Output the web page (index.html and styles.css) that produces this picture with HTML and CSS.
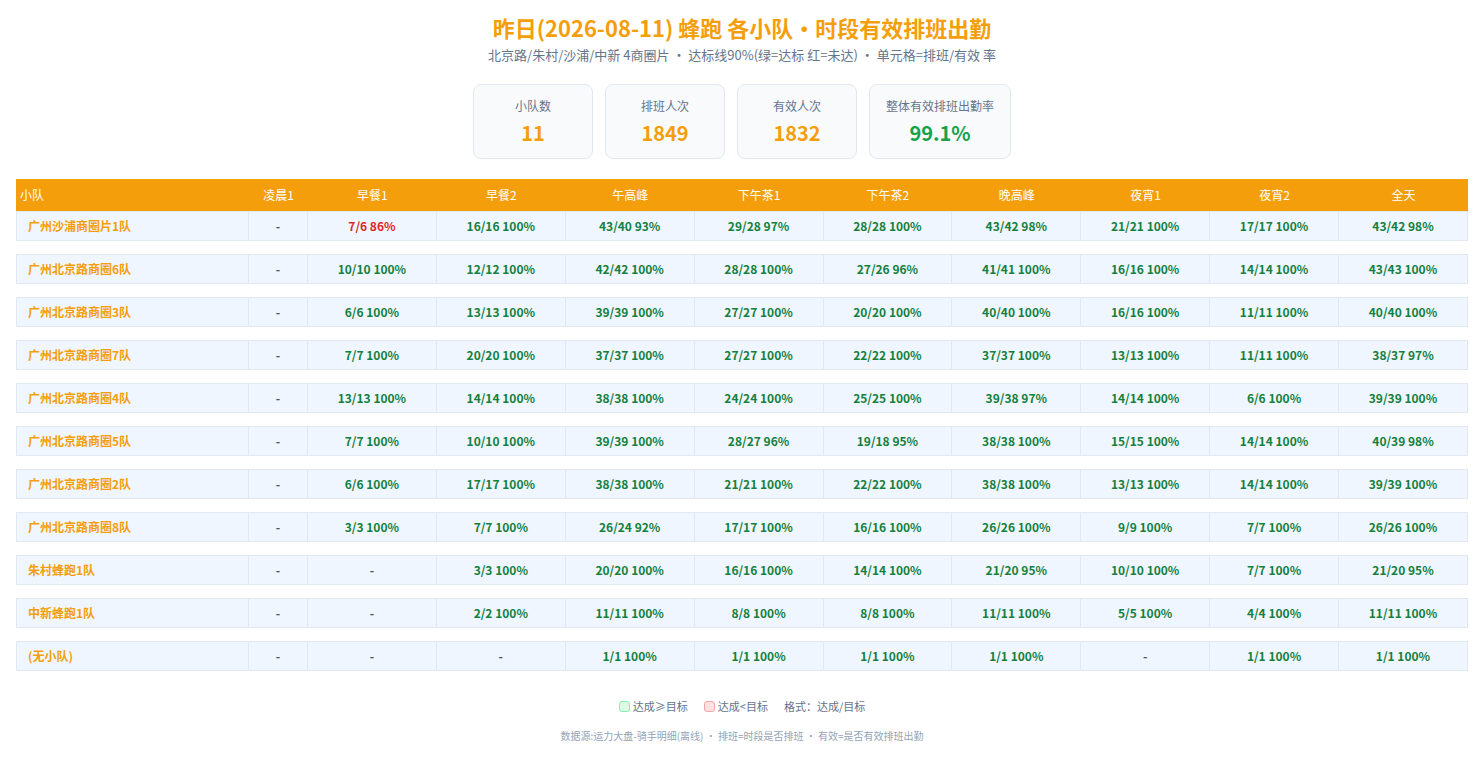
FILE: index.html
```html
<!DOCTYPE html>
<html lang="zh-CN">
<head>
<meta charset="utf-8">
<title>蜂跑 各小队·时段有效排班出勤</title>
<link rel="stylesheet" href="styles.css">
</head>
<body>
<header class="head">
  <h1 class="title">昨日(2026-08-11) 蜂跑 各小队・时段有效排班出勤</h1>
  <p class="subtitle">北京路/朱村/沙浦/中新 4商圈片 ・ 达标线90%(绿=达标 红=未达) ・ 单元格=排班/有效 率</p>
</header>
<section class="cards">
  <div class="card"><div class="card-label">小队数</div><div class="card-value">11</div></div>
  <div class="card"><div class="card-label">排班人次</div><div class="card-value">1849</div></div>
  <div class="card"><div class="card-label">有效人次</div><div class="card-value">1832</div></div>
  <div class="card"><div class="card-label">整体有效排班出勤率</div><div class="card-value good">99.1%</div></div>
</section>
<table class="grid">
  <colgroup>
    <col class="c-name"><col class="c-early"><col class="c-slot"><col class="c-slot"><col class="c-slot"><col class="c-slot"><col class="c-slot"><col class="c-slot"><col class="c-slot"><col class="c-slot"><col class="c-slot">
  </colgroup>
  <thead>
    <tr><th class="th-name">小队</th><th>凌晨1</th><th>早餐1</th><th>早餐2</th><th>午高峰</th><th>下午茶1</th><th>下午茶2</th><th>晚高峰</th><th>夜宵1</th><th>夜宵2</th><th>全天</th></tr>
  </thead>
  <tbody id="rows"></tbody>
</table>
<div class="legend">
  <span class="lg"><i class="sw sw-ok"></i>达成≥目标</span>
  <span class="lg"><i class="sw sw-bad"></i>达成&lt;目标</span>
  <span class="lg">格式：达成/目标</span>
</div>
<p class="foot">数据源:运力大盘-骑手明细(离线) ・ 排班=时段是否排班 ・ 有效=是否有效排班出勤</p>
<script>
var data = [
 ["广州沙浦商圈片1队","-","7/6 86%","16/16 100%","43/40 93%","29/28 97%","28/28 100%","43/42 98%","21/21 100%","17/17 100%","43/42 98%"],
 ["广州北京路商圈6队","-","10/10 100%","12/12 100%","42/42 100%","28/28 100%","27/26 96%","41/41 100%","16/16 100%","14/14 100%","43/43 100%"],
 ["广州北京路商圈3队","-","6/6 100%","13/13 100%","39/39 100%","27/27 100%","20/20 100%","40/40 100%","16/16 100%","11/11 100%","40/40 100%"],
 ["广州北京路商圈7队","-","7/7 100%","20/20 100%","37/37 100%","27/27 100%","22/22 100%","37/37 100%","13/13 100%","11/11 100%","38/37 97%"],
 ["广州北京路商圈4队","-","13/13 100%","14/14 100%","38/38 100%","24/24 100%","25/25 100%","39/38 97%","14/14 100%","6/6 100%","39/39 100%"],
 ["广州北京路商圈5队","-","7/7 100%","10/10 100%","39/39 100%","28/27 96%","19/18 95%","38/38 100%","15/15 100%","14/14 100%","40/39 98%"],
 ["广州北京路商圈2队","-","6/6 100%","17/17 100%","38/38 100%","21/21 100%","22/22 100%","38/38 100%","13/13 100%","14/14 100%","39/39 100%"],
 ["广州北京路商圈8队","-","3/3 100%","7/7 100%","26/24 92%","17/17 100%","16/16 100%","26/26 100%","9/9 100%","7/7 100%","26/26 100%"],
 ["朱村蜂跑1队","-","-","3/3 100%","20/20 100%","16/16 100%","14/14 100%","21/20 95%","10/10 100%","7/7 100%","21/20 95%"],
 ["中新蜂跑1队","-","-","2/2 100%","11/11 100%","8/8 100%","8/8 100%","11/11 100%","5/5 100%","4/4 100%","11/11 100%"],
 ["(无小队)","-","-","-","1/1 100%","1/1 100%","1/1 100%","1/1 100%","-","1/1 100%","1/1 100%"]
];
var tb = document.getElementById("rows");
var html = "";
data.forEach(function (r, i) {
  if (i > 0) html += '<tr class="spacer"><td colspan="11"></td></tr>';
  html += '<tr class="row"><td class="name">' + r[0] + '</td>';
  for (var j = 1; j < r.length; j++) {
    var v = r[j], cls = "dash";
    if (v !== "-") {
      var pct = parseInt(v.split(" ")[1], 10);
      cls = pct >= 90 ? "ok" : "bad";
    }
    html += '<td class="' + cls + '">' + v + '</td>';
  }
  html += '</tr>';
});
tb.innerHTML = html;
</script>
</body>
</html>
```

FILE: styles.css
```css
* { box-sizing: border-box; }
html, body { margin: 0; padding: 0; background: #ffffff; }
body {
  font-family: "Noto Sans CJK SC", "Noto Sans", sans-serif;
  color: #334155;
  padding: 12px 16px 0;
}
.head { text-align: center; }
.title {
  margin: 0;
  font-size: 22px;
  line-height: 30px;
  font-weight: 700;
  color: #f59e0b;
}
.subtitle {
  margin: 4px 0 0;
  font-size: 13px;
  line-height: 18px;
  color: #64748b;
}
.cards {
  display: flex;
  justify-content: center;
  gap: 12px;
  margin-top: 20px;
}
.card {
  min-width: 120px;
  height: 75px;
  padding: 12px 16px;
  background: #f8fafc;
  border: 1px solid #e2e8f0;
  border-radius: 8px;
  text-align: center;
}
.card-label { font-size: 12px; line-height: 18px; color: #64748b; }
.card-value {
  margin-top: 4px;
  font-size: 20px;
  line-height: 28px;
  font-weight: 700;
  color: #f59e0b;
}
.card-value.good { color: #16a34a; }

.grid {
  width: 100%;
  margin-top: 20px;
  border-collapse: separate;
  border-spacing: 0;
  table-layout: fixed;
  font-size: 12px;
}
.c-name { width: 233px; }
.c-early { width: 59px; }
.grid th {
  background: #f59e0b;
  color: #ffffff;
  font-weight: 400;
  line-height: 16px;
  padding: 8px 4px;
  text-align: center;
}
.grid th.th-name { text-align: left; }
.row td {
  background: #eff6ff;
  border-top: 1px solid #e2e8f0;
  border-bottom: 1px solid #e2e8f0;
  border-right: 1px solid #e2e8f0;
  line-height: 18px;
  padding: 5px 4px;
  text-align: center;
  font-weight: 700;
  white-space: nowrap;
}
.row td:first-child { border-left: 1px solid #e2e8f0; }
.row td.name {
  text-align: left;
  padding-left: 11px;
  color: #f59e0b;
}
.row td.ok { color: #15803d; }
.row td.bad { color: #dc2626; }
.row td.dash { color: #475569; }
.spacer td { height: 13px; padding: 0; border: 0; background: transparent; }

.legend {
  display: flex;
  justify-content: center;
  gap: 16px;
  margin-top: 26px;
  font-size: 11px;
  line-height: 18px;
  color: #64748b;
}
.lg { display: inline-flex; align-items: center; }
.sw {
  display: inline-block;
  width: 11px;
  height: 11px;
  border-radius: 3px;
  margin-right: 3px;
}
.sw-ok { background: #dcfce7; border: 1px solid #86efac; }
.sw-bad { background: #fee2e2; border: 1px solid #fca5a5; }
.foot {
  margin: 13px 0 0;
  text-align: center;
  font-size: 10px;
  line-height: 16px;
  color: #94a3b8;
}
```
